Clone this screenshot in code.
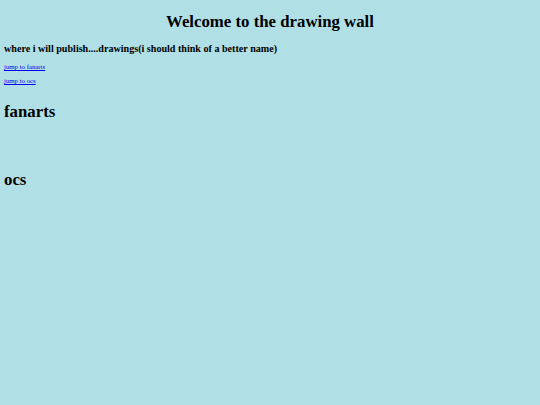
export default function App() {
  return (
    <div className="min-h-[405px] bg-[#b0e0e6] px-[4px] pt-[12px] text-black" style={{ fontFamily: '"Liberation Serif", "Times New Roman", serif' }}>
      <h1 className="text-center text-[16.8px] font-bold leading-[20px]">Welcome to the drawing wall</h1>
      <h3 className="mt-[11px] text-[10.1px] font-bold leading-[12px]">
        where i will publish....drawings(i should think of a better name)
      </h3>
      <p className="mt-[8px] text-[6.8px] leading-[8px]">
        <a href="#fanarts" className="text-[#0000ee] underline">jump to fanarts</a>
      </p>
      <p className="mt-[6px] text-[6.8px] leading-[8px]">
        <a href="#ocs" className="text-[#0000ee] underline">jump to ocs</a>
      </p>
      <h1 id="fanarts" className="mt-[17px] text-[16.8px] font-bold leading-[20px]">fanarts</h1>
      <h1 id="ocs" className="mt-[48px] text-[16.8px] font-bold leading-[20px]">ocs</h1>
    </div>
  );
}
